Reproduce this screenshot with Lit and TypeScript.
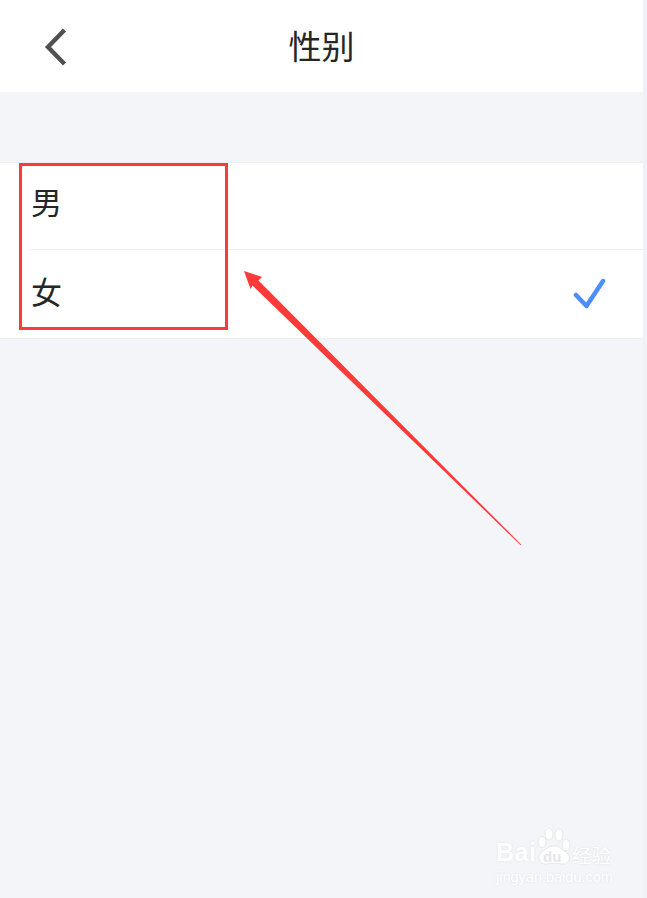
import { LitElement, css, html, svg } from "lit";
import { customElement, property } from "lit/decorators.js";

/** One selectable row of the gender list. */
@customElement("gender-row")
export class GenderRow extends LitElement {
  @property() label = "";
  @property({ type: Boolean }) checked = false;

  static styles = css`
    :host {
      display: flex;
      align-items: center;
      justify-content: space-between;
      padding: 0 37px 0 31px;
      height: 86px;
      font-size: 31px;
      line-height: 1;
      color: #262626;
    }
    :host([tall]) {
      height: 88px;
    }
    span {
      margin-bottom: 12px;
    }
    :host([tall]) span {
      margin-bottom: 8px;
    }
    svg {
      display: block;
    }
  `;

  render() {
    return html`
      <span>${this.label}</span>
      ${this.checked
        ? html`<svg width="34" height="34" viewBox="0 0 34 34" fill="none">
            <path
              d="M4 18L14.5 29L31 4"
              stroke="#4c8dff"
              stroke-width="4.5"
              stroke-linecap="round"
              stroke-linejoin="round"
            />
          </svg>`
        : ""}
    `;
  }
}

@customElement("app-root")
export class AppRoot extends LitElement {
  static styles = css`
    :host {
      display: flex;
      position: relative;
      width: 647px;
      height: 898px;
      overflow: hidden;
      background: #eff3f9;
      font-family: "Noto Sans CJK SC", "Liberation Serif", serif;
    }
    .page {
      width: 643px;
      background: #f4f5f8;
    }
    .bar {
      height: 92px;
      background: #fff;
      display: flex;
      align-items: center;
      justify-content: center;
      position: relative;
    }
    .bar h1 {
      margin: 0 0 2px 0;
      font-size: 33px;
      font-weight: 400;
      line-height: 1;
      color: #262626;
    }
    .back {
      position: absolute;
      left: 41px;
      top: 24px;
    }
    .list {
      margin-top: 70px;
      background: #fff;
      border-top: 1px solid #eceef2;
      border-bottom: 1px solid #eceef2;
    }
    .sep {
      height: 1px;
      margin-left: 30px;
      background: #eceef2;
    }
    .box {
      position: absolute;
      left: 19px;
      top: 163px;
      width: 209px;
      height: 167px;
      box-sizing: border-box;
      border: 3px solid #fd3a3a;
    }
    .arrow {
      position: absolute;
      left: 0;
      top: 0;
    }
    .mark {
      position: absolute;
      left: 496px;
      top: 826px;
      width: 120px;
      height: 60px;
      color: #fff;
    }
    .mark span {
      position: absolute;
      white-space: nowrap;
      line-height: 1;
      font-family: "Liberation Sans", sans-serif;
      text-shadow: 0 0 2px #dcdee2;
    }
    .bai {
      left: 0;
      top: 14px;
      font-size: 25px;
      font-weight: 700;
      letter-spacing: 0.5px;
    }
    .du {
      left: 47px;
      top: 23px;
      font-size: 15px;
      font-weight: 700;
      color: #e4e6e9;
    }
    .mark .du {
      text-shadow: none;
    }
    .mark .jy {
      left: 76px;
      top: 19px;
      font-size: 19.5px;
      font-family: "Noto Sans CJK SC", sans-serif;
    }
    .url {
      left: 0;
      top: 44px;
      font-size: 14.5px;
    }
    .paw {
      position: absolute;
      left: 38px;
      top: 0;
    }
  `;

  render() {
    return html`
      <div class="page">
        <header class="bar">
          <svg class="back" width="32" height="46" viewBox="0 0 32 46" fill="none">
            <path d="M23.5 6L7 23L23.5 40" stroke="#505050" stroke-width="4.4" />
          </svg>
          <h1>性别</h1>
        </header>
        <div class="list">
          <gender-row label="男"></gender-row>
          <div class="sep"></div>
          <gender-row tall label="女" checked></gender-row>
        </div>
      </div>

      <div class="box"></div>
      <svg class="arrow" width="647" height="898" viewBox="0 0 647 898">
        ${svg`<polygon
          fill="#fd3a3a"
          points="244,271 262,277 258.5,280.5 521.3,544.7 520.7,545.3 252.5,285.5 250.5,289"
        />`}
      </svg>

      <div class="mark">
        <svg class="paw" width="40" height="42" viewBox="0 0 40 42" fill="#fff" stroke="#e6e8eb" stroke-width="1">
          <ellipse cx="8" cy="16" rx="4" ry="5.5" />
          <ellipse cx="15" cy="8" rx="4" ry="6" />
          <ellipse cx="25" cy="9" rx="4" ry="6" />
          <ellipse cx="32" cy="19" rx="4" ry="6" />
          <path d="M20 20C14 20 12 23 8 26C2 30 5 39 12 38C17 37 23 37 28 38C35 39 38 31 33 27C28 24 26 20 20 20Z" />
        </svg>
        <span class="bai">Bai</span>
        <span class="du">du</span>
        <span class="jy">经验</span>
        <span class="url">jingyan.baidu.com</span>
      </div>
    `;
  }
}
